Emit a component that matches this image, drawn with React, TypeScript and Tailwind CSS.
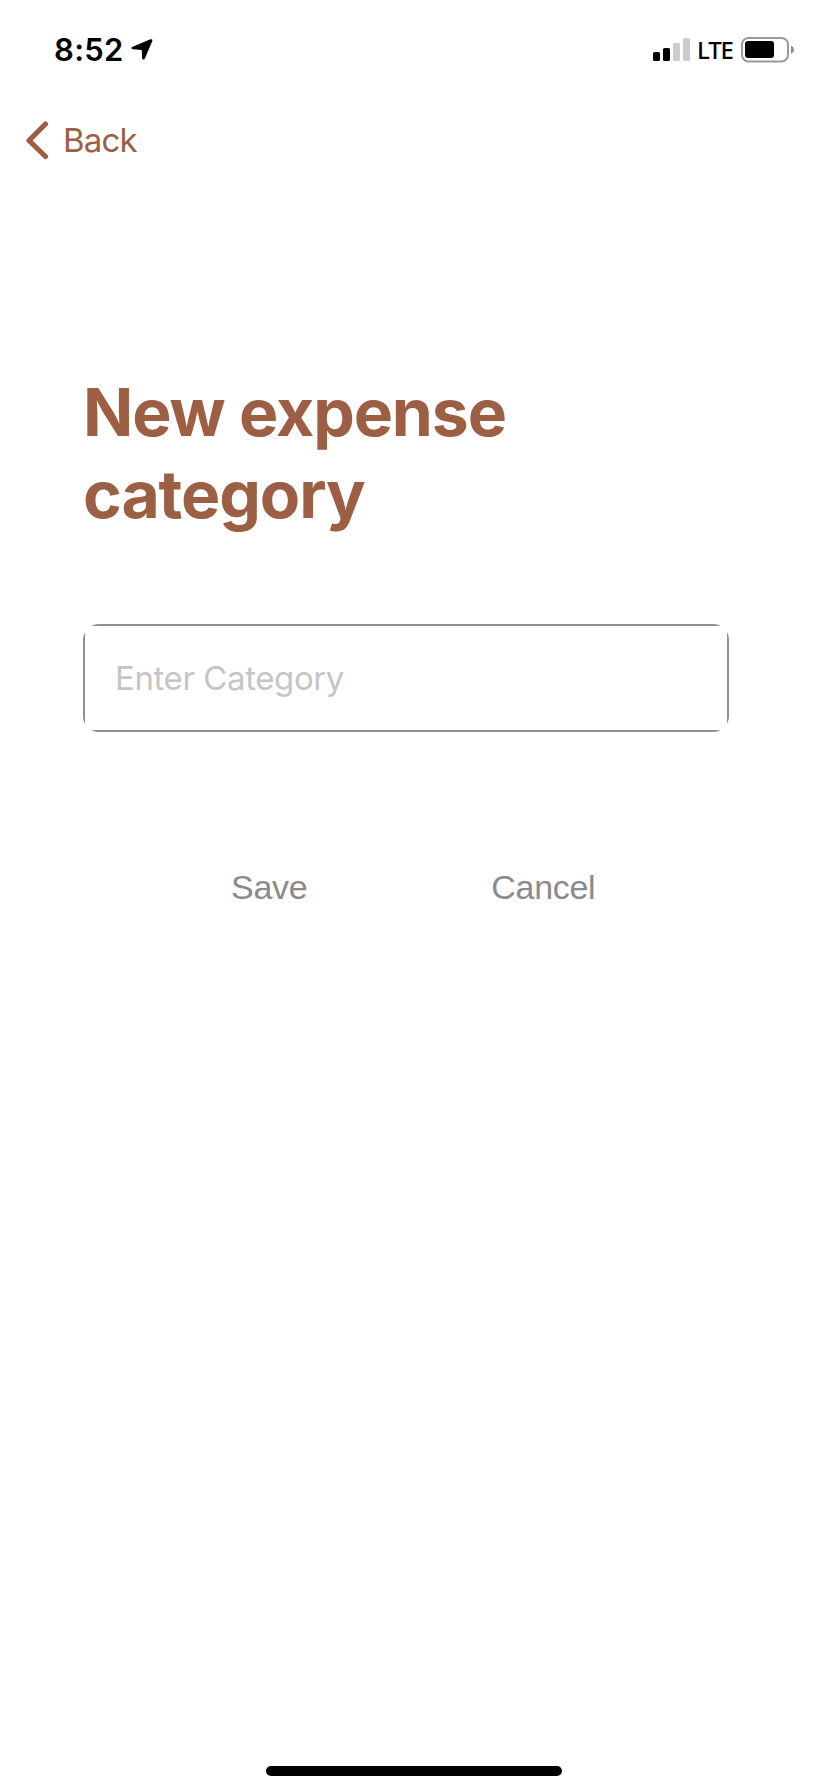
import { useState } from "react";

function StatusBar() {
  return (
    <header className="flex h-[100px] items-start justify-between pt-[30px] pr-[33px] pl-[54px] text-black">
      <div className="flex h-10 items-center gap-[8px]">
        <span className="w-[69px] whitespace-nowrap text-[31px] leading-10 font-semibold tracking-[0.3px]">
          8:52
        </span>
        <svg width="22" height="22" viewBox="0 0 22 22" aria-hidden="true">
          <path
            d="M1.1 7.9 19.4.3Q22 -.3 21.2 2.3L14 19.3Q12.4 22 11.1 19.2L10.8 11.1 2 10.3Q-.8 9.3 1.1 7.9Z"
            fill="currentColor"
          />
        </svg>
      </div>
      <div className="flex h-10 items-center">
        <svg width="38" height="24" viewBox="0 0 38 24" aria-hidden="true">
          <rect x="0" y="14" width="7" height="9" rx="1.6" fill="#000" />
          <rect x="10" y="10" width="7" height="13" rx="1.6" fill="#000" />
          <rect x="20" y="5" width="7" height="18" rx="1.6" fill="#ccc" />
          <rect x="30" y="0" width="7" height="23" rx="1.6" fill="#ccc" />
        </svg>
        <span className="ml-[6px] w-[44px] font-['Noto_Sans',sans-serif] text-[24px] leading-10 font-medium tracking-[-1.1px]">
          LTE
        </span>
        <svg width="54" height="26" viewBox="0 0 54 26" aria-hidden="true">
          <rect x="1" y="1" width="46" height="23.4" rx="6.5" fill="none" stroke="#999" strokeWidth="2" />
          <rect x="4" y="4" width="29" height="17" rx="3" fill="#000" />
          <path d="M50 8.5Q53 10 53 12.7T50 17Z" fill="#8c8c8c" />
        </svg>
      </div>
    </header>
  );
}

export default function App() {
  const [category, setCategory] = useState("");

  return (
    <div className="flex h-[1792px] w-[828px] flex-col bg-white font-['Inter',sans-serif]">
      <StatusBar />
      <nav className="flex h-20 items-center pl-[25px] text-[#9c5f44]">
        <button className="flex items-center gap-[14px]">
          <svg width="24" height="40" viewBox="0 0 24 40" fill="none" aria-hidden="true">
            <path
              d="M20.5 4 4 20.5 20.5 36.5"
              stroke="currentColor"
              strokeWidth="5.2"
              strokeLinecap="round"
              strokeLinejoin="round"
            />
          </svg>
          <span className="text-[33px] leading-10 tracking-[-0.8px]">Back</span>
        </button>
      </nav>
      <main className="flex flex-1 flex-col pt-[191px] pr-[99px] pl-[83px]">
        <h1 className="text-[66px] leading-[82px] font-bold tracking-[-1.1px] text-[#9c5f44]">
          New expense
          <br />
          category
        </h1>
        <div className="mt-[89px] h-[108px] rounded-[16px] border-2 border-[#8e8e93]">
          <input
            className="block h-full w-full bg-white px-[30px] text-[33px] tracking-[-0.4px] text-black outline-none placeholder:text-[#c5c5c7]"
            placeholder="Enter Category"
            aria-label="Category"
            value={category}
            onChange={(e) => setCategory(e.target.value)}
          />
        </div>
        <div className="mt-[135px] flex gap-[184px] pl-[148px] font-['Liberation_Sans',sans-serif] text-[34px] leading-10 tracking-[-0.3px] text-[#8b8b8b]">
          <button>Save</button>
          <button>Cancel</button>
        </div>
      </main>
      <footer className="flex h-[26px] justify-center">
        <div className="h-[10px] w-[296px] rounded-full bg-black" />
      </footer>
    </div>
  );
}
